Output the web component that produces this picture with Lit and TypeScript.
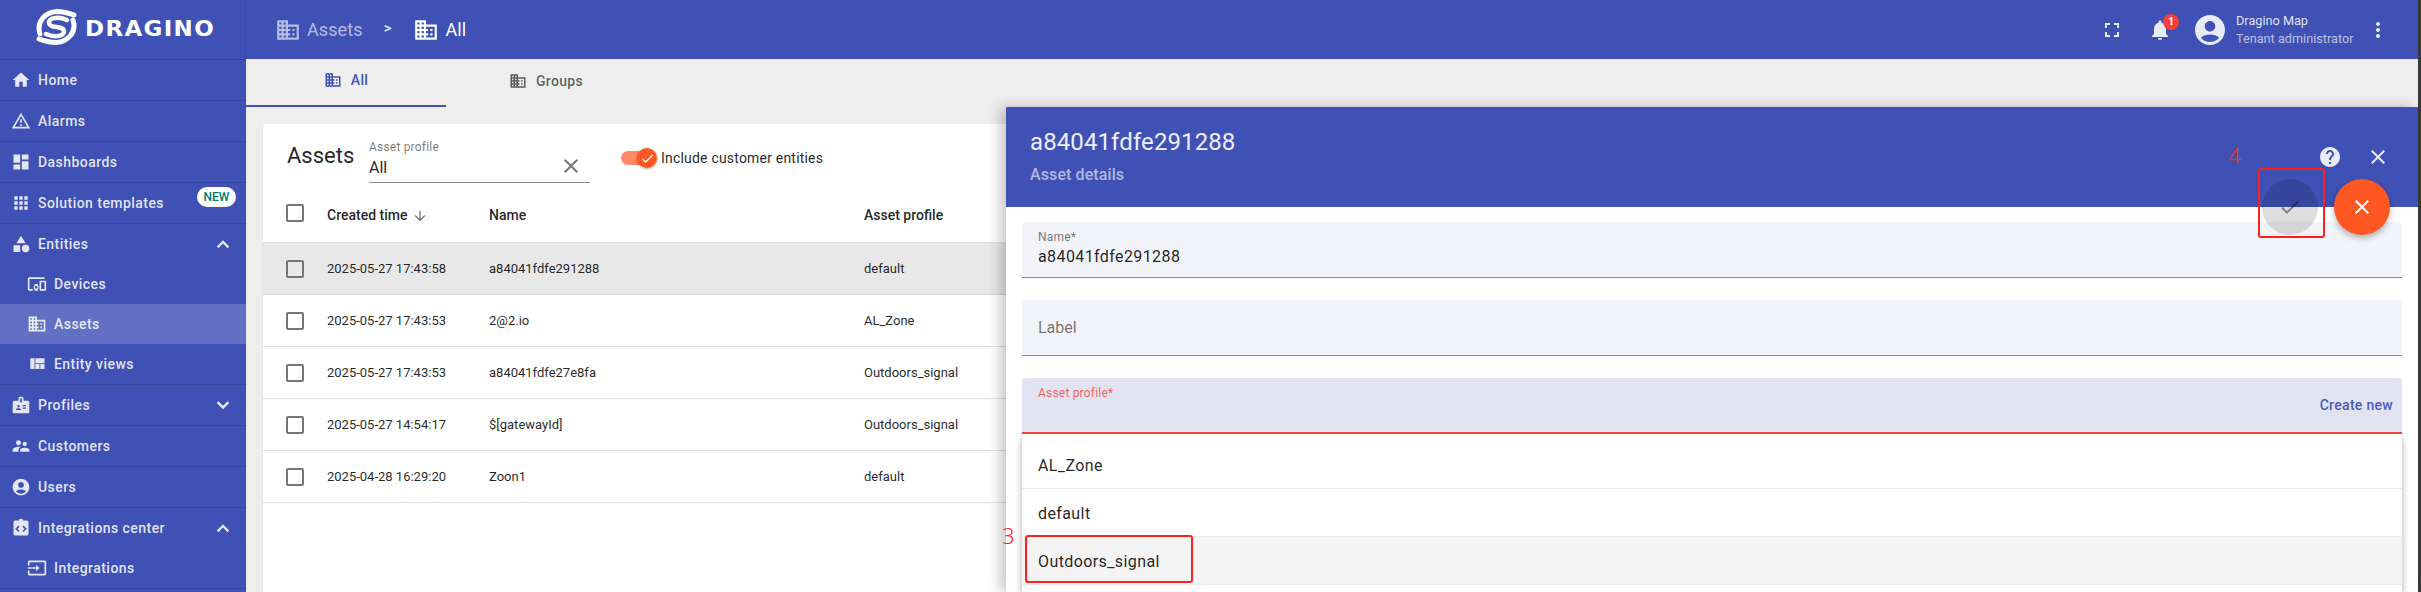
import { LitElement, html, css, svg } from "lit";
import { customElement } from "lit/decorators.js";

const P: Record<string, string> = {
  domain: "M12 7V3H2v18h20V7H12zM6 19H4v-2h2v2zm0-4H4v-2h2v2zm0-4H4V9h2v2zm0-4H4V5h2v2zm4 12H8v-2h2v2zm0-4H8v-2h2v2zm0-4H8V9h2v2zm0-4H8V5h2v2zm10 12h-8v-2h2v-2h-2v-2h2v-2h-2V9h8v10zm-2-8h-2v2h2v-2zm0 4h-2v2h2v-2z",
  home: "M10 20v-6h4v6h5v-8h3L12 3 2 12h3v8z",
  warning: "M12 5.99L19.53 19H4.47L12 5.99M12 2L1 21h22L12 2zm1 14h-2v2h2v-2zm0-6h-2v4h2v-4z",
  dashboard: "M3 13h8V3H3v10zm0 8h8v-6H3v6zm10 0h8V11h-8v10zm0-18v6h8V3h-8z",
  apps: "M4 8h4V4H4v4zm6 12h4v-4h-4v4zm-6 0h4v-4H4v4zm0-6h4v-4H4v4zm6 0h4v-4h-4v4zm6-10v4h4V4h-4zm-6 4h4V4h-4v4zm6 6h4v-4h-4v4zm0 6h4v-4h-4v4z",
  category: "M12 2l-5.500 9h11zM17.500 13a4.500 4.500 0 1 0 0 9 4.500 4.500 0 0 0 0-9zM3 13.500h8v8H3z",
  devices: "M3 6h18V4H3c-1.100 0-2 .9-2 2v12c0 1.100.9 2 2 2h4v-2H3V6zm10 6H9v1.780c-.61.55-1 1.330-1 2.220s.39 1.670 1 2.220V20h4v-1.780c.61-.55 1-1.340 1-2.220s-.39-1.670-1-2.220V12zm-2 5.500c-.83 0-1.500-.67-1.500-1.500s.67-1.500 1.500-1.500 1.500.67 1.500 1.500-.67 1.500-1.500 1.500zM22 8h-6c-.5 0-1 .5-1 1v10c0 .5.5 1 1 1h6c.5 0 1-.5 1-1V9c0-.5-.5-1-1-1zm-1 10h-4v-8h4v8z",
  quilt: "M10 18h5v-6h-5v6zm-6 0h5V5H4v13zm12 0h5v-6h-5v6zM10 5v6h11V5H10z",
  badge: "M20 7h-5V4c0-1.100-.9-2-2-2h-2c-1.100 0-2 .9-2 2v3H4c-1.100 0-2 .9-2 2v11c0 1.100.9 2 2 2h16c1.100 0 2-.9 2-2V9c0-1.100-.9-2-2-2zM9 12c.83 0 1.500.67 1.500 1.500S9.830 15 9 15s-1.500-.67-1.500-1.500S8.170 12 9 12zm3 6H6v-.75c0-1 2-1.500 3-1.500s3 .5 3 1.500V18zm1-9h-2V4h2v5zm5 7.500h-4V15h4v1.500zm0-3h-4V12h4v1.500z",
  people: "M16.500 12c1.380 0 2.490-1.120 2.490-2.500S17.880 7 16.500 7C15.120 7 14 8.120 14 9.500s1.120 2.500 2.500 2.500zM9 11c1.660 0 2.990-1.340 2.990-3S10.660 5 9 5C7.340 5 6 6.340 6 8s1.340 3 3 3zm7.500 3c-1.830 0-5.500.92-5.500 2.750V19h11v-2.250c0-1.830-3.670-2.750-5.500-2.750zM9 13c-2.330 0-7 1.170-7 3.500V19h7v-2.250c0-.85.33-2.340 2.370-3.470C10.500 13.100 9.660 13 9 13z",
  account: "M12 2C6.480 2 2 6.480 2 12s4.480 10 10 10 10-4.480 10-10S17.520 2 12 2zm0 4c1.930 0 3.500 1.570 3.500 3.500S13.930 13 12 13s-3.500-1.570-3.500-3.500S10.070 6 12 6zm0 14c-2.030 0-4.430-.82-6.140-2.880C7.550 15.800 9.680 15 12 15s4.450.8 6.140 2.120C16.430 19.180 14.030 20 12 20z",
  integ: "M19 3h-4.180C14.400 1.840 13.300 1 12 1s-2.400.84-2.820 2H5c-1.100 0-2 .9-2 2v14c0 1.100.9 2 2 2h14c1.100 0 2-.9 2-2V5c0-1.100-.9-2-2-2zM10.300 15.600L9 16.900 5.100 13 9 9.100l1.300 1.300L7.700 13l2.600 2.600zm4.700 1.300l-1.300-1.300 2.600-2.600-2.600-2.600L15 9.100l3.900 3.900-3.900 3.900z",
  input: "M21 3.010H3c-1.100 0-2 .9-2 2V9h2V4.990h18v14.030H3V15H1v4.010c0 1.100.9 1.980 2 1.980h18c1.100 0 2-.88 2-1.980v-14c0-1.110-.9-2-2-2zM11 16l4-4-4-4v3H1v2h10v3z",
  less: "M12 7.500l-7.500 7.500 2 2 5.500-5.500 5.500 5.500 2-2z",
  more: "M17.500 7.500L12 13 6.500 7.500l-2 2L12 17l7.500-7.500z",
  fullscreen: "M7 14H5v5h5v-2H7v-3zm-2-4h2V7h3V5H5v5zm12 7h-3v2h5v-5h-2v3zM14 5v2h3v3h2V5h-5z",
  bell: "M12 22c1.100 0 2-.9 2-2h-4c0 1.100.89 2 2 2zm6-6v-5c0-3.070-1.640-5.640-4.500-6.320V4c0-.83-.67-1.500-1.500-1.500s-1.500.67-1.500 1.500v.68C7.630 5.360 6 7.920 6 11v5l-2 2v1h16v-1l-2-2z",
  kebab: "M12 8c1.100 0 2-.9 2-2s-.9-2-2-2-2 .9-2 2 .9 2 2 2zm0 2c-1.100 0-2 .9-2 2s.9 2 2 2 2-.9 2-2-.9-2-2-2zm0 6c-1.100 0-2 .9-2 2s.9 2 2 2 2-.9 2-2-.9-2-2-2z",
  help: "M12 2C6.480 2 2 6.480 2 12s4.480 10 10 10 10-4.480 10-10S17.520 2 12 2zm1 17h-2v-2h2v2zm2.070-7.750l-.9.92C13.450 12.900 13 13.500 13 15h-2v-.5c0-1.100.45-2.100 1.170-2.830l1.240-1.260c.37-.36.59-.86.59-1.410 0-1.100-.9-2-2-2s-2 .9-2 2H8c0-2.210 1.790-4 4-4s4 1.790 4 4c0 .88-.36 1.680-.93 2.250z",
  close: "M19 6.410L17.590 5 12 10.590 6.410 5 5 6.410 10.590 12 5 17.590 6.410 19 12 13.410 17.590 19 19 17.590 13.410 12z",
  check: "M9 16.170L4.830 12l-1.420 1.410L9 19 21 7l-1.410-1.410z",
  down: "M20 12l-1.410-1.410L13 16.170V4h-2v12.170l-5.580-5.590L4 12l8 8 8-8z",
};

const icon = (name: string, cls = "") =>
  html`<svg class="ic ${cls}" viewBox="0 0 24 24" fill="currentColor" fill-rule="evenodd">${svg`<path d=${P[name]}></path>`}</svg>`;

type Item = { label: string; icon: string; sub?: boolean; active?: boolean; chev?: string; badge?: string; open?: boolean };
const MENU: Item[] = [
  { label: "Home", icon: "home" },
  { label: "Alarms", icon: "warning" },
  { label: "Dashboards", icon: "dashboard" },
  { label: "Solution templates", icon: "apps", badge: "NEW" },
  { label: "Entities", icon: "category", chev: "less", open: true },
  { label: "Devices", icon: "devices", sub: true },
  { label: "Assets", icon: "domain", sub: true, active: true },
  { label: "Entity views", icon: "quilt", sub: true },
  { label: "Profiles", icon: "badge", chev: "more" },
  { label: "Customers", icon: "people" },
  { label: "Users", icon: "account" },
  { label: "Integrations center", icon: "integ", chev: "less", open: true },
  { label: "Integrations", icon: "input", sub: true },
];

const ROWS = [
  ["2025-05-27 17:43:58", "a84041fdfe291288", "default"],
  ["2025-05-27 17:43:53", "2@2.io", "AL_Zone"],
  ["2025-05-27 17:43:53", "a84041fdfe27e8fa", "Outdoors_signal"],
  ["2025-05-27 14:54:17", "$[gatewayId]", "Outdoors_signal"],
  ["2025-04-28 16:29:20", "Zoon1", "default"],
];

@customElement("app-root")
export class AppRoot extends LitElement {
  static styles = css`
    :host {
      display: block;
      position: relative;
      width: 2421px;
      height: 592px;
      overflow: hidden;
      font-family: Roboto, "Liberation Sans", sans-serif;
      color: rgba(0, 0, 0, 0.87);
      background: #eee;
    }
    * { box-sizing: border-box; }
    .ic { display: block; flex: none; width: 24px; height: 24px; }
    .app { display: flex; height: 592px; }
    .strip { flex: none; width: 3px; background: #3a3a3a; }

    /* sidebar */
    .side { flex: none; width: 246px; background: #3f51b5; color: rgba(255, 255, 255, 0.86); overflow: hidden; }
    .logo { height: 60px; display: flex; align-items: flex-start; padding: 9px 0 0 35px; gap: 7px; border-bottom: 1px solid rgba(0, 0, 0, 0.14); border-right: 1px solid rgba(0, 0, 0, 0.06); }
    .swirl { width: 43px; height: 36px; flex: none; }
    .brand { font-family: "DejaVu Sans", sans-serif; font-weight: 700; font-size: 20.500px; line-height: 36px; margin-top: 2px; letter-spacing: 1.2px; color: #fff; transform: scaleX(1.12); transform-origin: 0 50%; }
    .mi { position: relative; display: flex; align-items: center; height: 41px; padding: 0 0 1px 11px; gap: 7px; font-size: 14px; font-weight: 500; letter-spacing: 0.45px; border-bottom: 1px solid rgba(0, 0, 0, 0.12); }
    .mi .ic { width: 20px; height: 20px; }
    .mi.open { height: 40px; border-bottom: 0; }
    .mi.sub { height: 40px; padding-left: 27px; border-bottom: 0; }
    .mi.active { background: rgba(255, 255, 255, 0.18); }
    .mi.last { height: 41px; border-bottom: 1px solid rgba(0, 0, 0, 0.12); }
    .mi .chev { position: absolute; right: 13px; top: 50%; margin-top: -10px; }
    .new { position: absolute; left: 197px; top: 4px; width: 39px; height: 20px; border-radius: 10px; background: #fff; color: #00796b; font-size: 12px; line-height: 20px; text-align: center; letter-spacing: 0; }

    /* main */
    .main { flex: 1; min-width: 0; display: flex; flex-direction: column; }
    .top { flex: none; height: 59px; background: #3f51b5; color: #fff; display: flex; align-items: center; padding: 0 28px 0 31px; }
    .crumb { display: flex; align-items: center; font-size: 18px; gap: 6px; letter-spacing: 0.1px; }
    .crumb .ic { width: 26px; height: 26px; margin-left: -2px; }
    .crumb.dim { color: rgba(255, 255, 255, 0.62); }
    .sep { font-size: 15px; font-weight: 500; margin: -3px 24px 0 21px; color: #e8eaf6; }
    .right { margin-left: auto; display: flex; align-items: center; color: #e8eaf6; }
    .bellwrap { position: relative; margin: 0 20px 0 24px; }
    .bdg { position: absolute; left: 15px; top: -4px; width: 16px; height: 16px; border-radius: 50%; background: #f44336; color: #fff; font-size: 10px; font-weight: 700; line-height: 16px; text-align: center; }
    .avatar { width: 36px; height: 36px; }
    .user { width: 130px; margin-left: 8px; font-size: 12.700px; line-height: 18px; color: rgba(255, 255, 255, 0.85); }
    .user div + div { color: rgba(255, 255, 255, 0.65); }

    .tabs { flex: none; height: 48px; display: flex; }
    .tab { width: 200px; display: flex; align-items: center; justify-content: center; gap: 9px; font-size: 14px; font-weight: 500; color: rgba(0, 0, 0, 0.62); padding-bottom: 5px; letter-spacing: 0.3px; }
    .tab .ic { width: 18px; height: 18px; }
    .tab.on { color: #3f51b5; border-bottom: 2px solid #3f51b5; }

    .content { flex: 1; min-height: 0; padding: 17px 16px 0 17px; display: flex; }
    .card { flex: 1; background: #fff; border-radius: 4px 4px 0 0; box-shadow: 0 1px 2px rgba(0, 0, 0, 0.1); }
    .bar { height: 59px; display: flex; align-items: flex-start; padding-left: 24px; }
    .ttl { font-size: 22px; line-height: 28px; margin-top: 18px; width: 82px; flex: none; }
    .filter { position: relative; width: 221px; height: 59px; border-bottom: 1px solid #8a8a8a; flex: none; }
    .filter label { display: block; font-size: 12px; line-height: 14px; margin-top: 16px; color: rgba(0, 0, 0, 0.54); letter-spacing: 0.2px; }
    .filter span { display: block; font-size: 16px; line-height: 20px; margin-top: 4px; }
    .filter .ic { position: absolute; right: 7px; top: 30px; color: #757575; }
    .toggle { position: relative; flex: none; width: 40px; height: 14px; margin: 27px 0 0 31px; }
    .track { position: absolute; left: 0; top: 0; width: 30px; height: 14px; border-radius: 7px; background: #ff8a65; }
    .thumb { position: absolute; left: 16px; top: -3px; width: 20px; height: 20px; border-radius: 50%; background: #ff5722; color: #fff; box-shadow: 0 1px 3px rgba(0, 0, 0, 0.35); display: flex; align-items: center; justify-content: center; }
    .thumb .ic { width: 15px; height: 15px; }
    .inc { font-size: 14px; line-height: 20px; margin: 24px 0 0 0; letter-spacing: 0.2px; }

    .row { display: grid; grid-template-columns: 41px 162px 375px 1fr; align-items: center; height: 52px; padding-left: 23px; font-size: 13px; border-bottom: 1px solid #e0e0e0; }
    .row.head { height: 60px; font-size: 14px; font-weight: 500; padding-top: 4px; border-bottom: 1px solid #e0e0e0; }
    .row.head .cb { margin-top: -4px; }
    .row.sel { background: #e8e8e8; border-bottom-color: #d6d6d6; }
    .cb { width: 18px; height: 18px; border: 2px solid #757575; border-radius: 2px; }
    .sort { display: flex; align-items: center; gap: 5px; }
    .sort .ic { width: 16px; height: 16px; color: #757575; margin-top: 2px; }

    /* drawer */
    .drawer { position: absolute; left: 1006px; top: 107px; width: 1412px; bottom: 0; background: #fff; box-shadow: -6px 0 12px rgba(0, 0, 0, 0.22); }
    .dh { height: 100px; background: #3f51b5; color: #fff; display: flex; padding: 0 28px 0 24px; }
    .dt { font-size: 24px; line-height: 30px; margin-top: 20px; letter-spacing: 0.1px; color: #eef; }
    .ds { font-size: 16px; line-height: 24px; margin-top: 6px; font-weight: 500; letter-spacing: 0.1px; color: rgba(255, 255, 255, 0.6); }
    .di { margin-left: auto; display: flex; gap: 24px; align-items: flex-start; padding-top: 38px; color: #e8eaf6; }
    .db { padding: 15px 16px 0; }
    .f { position: relative; height: 56px; background: #f3f4f9; border-radius: 4px 4px 0 0; border-bottom: 1px solid #8a8a8f; margin-bottom: 22px; padding: 8px 16px 0; }
    .f label { display: block; font-size: 12px; line-height: 14px; letter-spacing: 0.2px; color: rgba(0, 0, 0, 0.54); }
    .f .v { font-size: 16px; line-height: 20px; margin-top: 3px; letter-spacing: 0.4px; }
    .f .ph { font-size: 16px; line-height: 20px; margin-top: 10px; color: rgba(0, 0, 0, 0.54); }
    .f.err { background: #e1e3f1; border-bottom: 2px solid #f44336; margin-bottom: 0; }
    .f.err label { color: rgba(244, 67, 54, 0.8); }
    .cn { position: absolute; right: 9px; top: 18px; font-size: 14px; line-height: 18px; font-weight: 500; letter-spacing: 0.3px; color: #4a5bbf; }
    .panel { background: #fff; padding-top: 7px; box-shadow: 0 4px 8px rgba(0, 0, 0, 0.3); height: 158px; }
    .o { height: 48px; display: flex; align-items: center; padding: 2px 16px 0; font-size: 16px; letter-spacing: 0.4px; border-bottom: 1px solid #ececec; }
    .o.hl { background: #f4f4f4; }

    .fab { position: absolute; top: 72px; width: 56px; height: 56px; border-radius: 50%; display: flex; align-items: center; justify-content: center; }
    .fab.off { left: 1256px; background: rgba(0, 0, 0, 0.13); color: rgba(0, 0, 0, 0.42); }
    .fab.go { left: 1328px; background: #ff5722; color: #fff; box-shadow: 0 3px 6px rgba(0, 0, 0, 0.3); }
    .mark { position: absolute; border: 2px solid #ff1f1f; border-radius: 3px; }
    .mark.m4 { left: 1252px; top: 61px; width: 67px; height: 70px; }
    .mark.m3 { left: 19px; top: 428px; width: 168px; height: 48px; }
    .num { position: absolute; color: #ff2a2a; font-family: "Noto Sans", sans-serif; font-weight: 300; font-size: 22px; line-height: 24px; }
    .num.n4 { left: 1222px; top: 36px; }
    .num.n3 { left: -4px; top: 416px; }
  `;

  private menuItem(m: Item, i: number) {
    const next = MENU[i + 1];
    const last = m.sub && (!next || !next.sub);
    const cls = ["mi", m.sub ? "sub" : "", m.active ? "active" : "", m.open ? "open" : "", last ? "last" : ""].join(" ");
    return html`<div class=${cls}>
      ${icon(m.icon)}<span>${m.label}</span>
      ${m.chev ? icon(m.chev, "chev") : ""}
      ${m.badge ? html`<span class="new">${m.badge}</span>` : ""}
    </div>`;
  }

  render() {
    return html`
      <div class="app">
        <aside class="side">
          <div class="logo">
            <svg class="swirl" viewBox="0 0 43 36" fill="none" stroke="#fff" stroke-linecap="round">
              <path stroke-width="5" d="M5 25C1 13 10 3 22 2.500C29 2.500 33 4 39 6"></path>
              <path stroke-width="5" d="M38 11C42 23 33 33 21 33.500C14 33.500 10 32 4 30"></path>
              <path stroke-width="4.500" d="M32 11C23 7 13 9 14 14C15 20 28 16 29 22C30 27 20 29 11 25"></path>
            </svg>
            <span class="brand">DRAGINO</span>
          </div>
          ${MENU.map((m, i) => this.menuItem(m, i))}
        </aside>
        <div class="main">
          <header class="top">
            <div class="crumb dim">${icon("domain")}<span>Assets</span></div>
            <span class="sep">&gt;</span>
            <div class="crumb">${icon("domain")}<span>All</span></div>
            <div class="right">
              ${icon("fullscreen")}
              <div class="bellwrap">${icon("bell")}<span class="bdg">1</span></div>
              ${icon("account", "avatar")}
              <div class="user"><div>Dragino Map</div><div>Tenant administrator</div></div>
              ${icon("kebab")}
            </div>
          </header>
          <nav class="tabs">
            <div class="tab on">${icon("domain")}<span>All</span></div>
            <div class="tab">${icon("domain")}<span>Groups</span></div>
          </nav>
          <div class="content">
            <section class="card">
              <div class="bar">
                <div class="ttl">Assets</div>
                <div class="filter">
                  <label>Asset profile</label><span>All</span>${icon("close")}
                </div>
                <div class="toggle">
                  <div class="track"></div>
                  <div class="thumb">${icon("check")}</div>
                </div>
                <div class="inc">Include customer entities</div>
              </div>
              <div class="row head">
                <div class="cb"></div>
                <div class="sort">Created time ${icon("down")}</div>
                <div>Name</div>
                <div>Asset profile</div>
              </div>
              ${ROWS.map(
                (r, i) => html`<div class="row ${i === 0 ? "sel" : ""}">
                  <div class="cb"></div>
                  <div>${r[0]}</div>
                  <div>${r[1]}</div>
                  <div>${r[2]}</div>
                </div>`
              )}
            </section>
          </div>
        </div>
        <div class="strip"></div>
      </div>

      <div class="drawer">
        <div class="dh">
          <div>
            <div class="dt">a84041fdfe291288</div>
            <div class="ds">Asset details</div>
          </div>
          <div class="di">${icon("help")}${icon("close")}</div>
        </div>
        <div class="db">
          <div class="f"><label>Name*</label><div class="v">a84041fdfe291288</div></div>
          <div class="f"><div class="ph">Label</div></div>
          <div class="f err"><label>Asset profile*</label><span class="cn">Create new</span></div>
          <div class="panel">
            <div class="o">AL_Zone</div>
            <div class="o">default</div>
            <div class="o hl">Outdoors_signal</div>
          </div>
        </div>
        <div class="fab off">${icon("check")}</div>
        <div class="fab go">${icon("close")}</div>
        <div class="mark m4"></div>
        <div class="mark m3"></div>
        <div class="num n4">4</div>
        <div class="num n3">3</div>
      </div>
    `;
  }
}
